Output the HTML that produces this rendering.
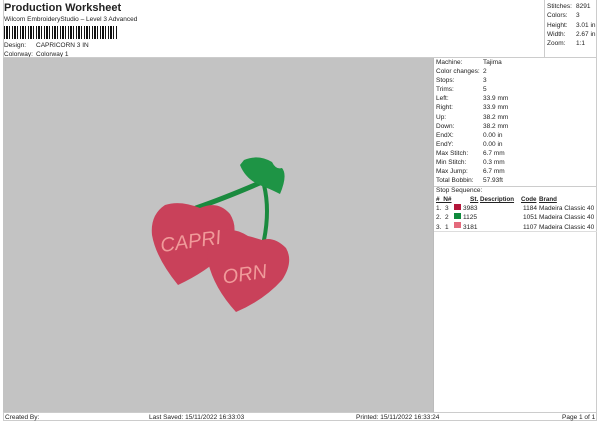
<!DOCTYPE html><html><head><style>
*{margin:0;padding:0;box-sizing:border-box}
body{width:600px;height:424px;background:#fff;font-family:"Liberation Sans",sans-serif;font-size:6.5px;color:#222;position:relative;overflow:hidden}
.a{position:absolute;white-space:nowrap}
.t{font-size:6.5px;line-height:9px}
</style></head><body>
<div class="a" style="left:4px;top:2px;font-size:11px;font-weight:bold">Production Worksheet</div>
<div class="a t" style="left:4px;top:15px">Wilcom EmbroideryStudio – Level 3 Advanced</div>
<div class="a" style="left:4px;top:26px;width:113px;height:13px;background:repeating-linear-gradient(90deg,#111 0 1px,#fff 1px 2px,#111 2px 4px,#fff 4px 5px,#111 5px 6px,#fff 6px 8px)"></div>
<div class="a t" style="left:4px;top:41px">Design:</div><div class="a t" style="left:36px;top:41px">CAPRICORN 3 IN</div>
<div class="a t" style="left:4px;top:50px">Colorway:</div><div class="a t" style="left:36px;top:50px">Colorway 1</div>
<div class="a" style="left:3px;top:0;width:594px;height:421px;border:1px solid #ccc;border-top:none"></div>
<div class="a" style="left:544px;top:0;width:1px;height:57px;background:#ccc"></div>
<div class="a" style="left:3px;top:57px;width:594px;height:1px;background:#ccc"></div>
<div class="a" style="left:3px;top:58px;width:430px;height:354px;background:#c3c3c3"></div>
<div class="a" style="left:433px;top:58px;width:1px;height:354px;background:#bbb"></div>
<div class="a" style="left:3px;top:412px;width:594px;height:1px;background:#ccc"></div>
<div class="a t" style="left:547px;top:2px;line-height:9.3px">Stitches:<br>Colors:<br>Height:<br>Width:<br>Zoom:</div>
<div class="a t" style="left:576px;top:2px;line-height:9.3px">8291<br>3<br>3.01 in<br>2.67 in<br>1:1</div>
<div class="a t" style="left:436px;top:58px;line-height:9.1px">Machine:<br>Color changes:<br>Stops:<br>Trims:<br>Left:<br>Right:<br>Up:<br>Down:<br>EndX:<br>EndY:<br>Max Stitch:<br>Min Stitch:<br>Max Jump:<br>Total Bobbin:</div>
<div class="a t" style="left:483px;top:58px;line-height:9.1px">Tajima<br>2<br>3<br>5<br>33.9 mm<br>33.9 mm<br>38.2 mm<br>38.2 mm<br>0.00 in<br>0.00 in<br>6.7 mm<br>0.3 mm<br>6.7 mm<br>57.93ft</div>
<div class="a" style="left:434px;top:186px;width:163px;height:1px;background:#ccc"></div>
<div class="a t" style="left:436px;top:186px">Stop Sequence:</div>
<div class="a t" style="left:436px;top:195px;font-weight:bold;text-decoration:underline">#&nbsp; N#</div>
<div class="a t" style="left:470px;top:195px;font-weight:bold;text-decoration:underline">St.</div>
<div class="a t" style="left:480px;top:195px;font-weight:bold;text-decoration:underline;font-size:6.2px">Description</div>
<div class="a t" style="left:521px;top:195px;font-weight:bold;text-decoration:underline;font-size:6.2px">Code</div>
<div class="a t" style="left:539px;top:195px;font-weight:bold;text-decoration:underline;font-size:6.2px">Brand</div>
<div class="a t" style="left:436px;top:204px;line-height:9.3px">1.&nbsp; 3<br>2.&nbsp; 2<br>3.&nbsp; 1</div>
<div class="a" style="left:454px;top:204px;width:7px;height:6px;background:#b3163a"></div>
<div class="a" style="left:454px;top:213px;width:7px;height:6px;background:#0f8a3c"></div>
<div class="a" style="left:454px;top:222px;width:7px;height:6px;background:#e46a7c"></div>
<div class="a t" style="left:463px;top:204px;line-height:9.3px">3983<br>1125<br>3181</div>
<div class="a t" style="left:523px;top:204px;line-height:9.3px">1184<br>1051<br>1107</div>
<div class="a t" style="left:539px;top:204px;line-height:9.3px">Madeira Classic 40<br>Madeira Classic 40<br>Madeira Classic 40</div>
<div class="a" style="left:434px;top:231px;width:163px;height:1px;background:#ddd"></div>
<div class="a t" style="left:5px;top:413px">Created By:</div>
<div class="a t" style="left:149px;top:413px">Last Saved: 15/11/2022 16:33:03</div>
<div class="a t" style="left:356px;top:413px">Printed: 15/11/2022 16:33:24</div>
<div class="a t" style="left:562px;top:413px">Page 1 of 1</div>
<svg class="a" style="left:0;top:0" width="600" height="424">
<path d="M196 208 Q225 198 262 182" stroke="#1a8a3e" stroke-width="5" fill="none" stroke-linecap="round"/>
<path d="M264 185 Q270 210 264 240" stroke="#1a8a3e" stroke-width="4" fill="none" stroke-linecap="round"/>
<path d="M244 160 Q258 154 272 162 Q276 170 282 168 Q288 175 280 194 Q268 188 262 186 Q246 180 240 165 Z" fill="#1e9445"/>
<path d="M200 208 Q180 200 165 205 Q150 215 152 235 Q156 258 178 285 Q210 270 228 250 Q240 230 230 214 Q218 200 200 208 Z" fill="#c9415a"/>
<path d="M248 236 Q232 226 218 232 Q206 242 208 262 Q214 288 236 312 Q264 300 282 280 Q294 262 286 248 Q274 236 262 240 Q256 238 248 236 Z" fill="#c9415a"/>
<g font-family="Liberation Sans" font-size="20" fill="#f09a9a" font-style="italic">
<text x="160" y="248" transform="rotate(-8 190 240)">CAPRI</text>
<text x="222" y="280" transform="rotate(-8 250 270)">ORN</text>
</g>
</svg>
</body></html>
